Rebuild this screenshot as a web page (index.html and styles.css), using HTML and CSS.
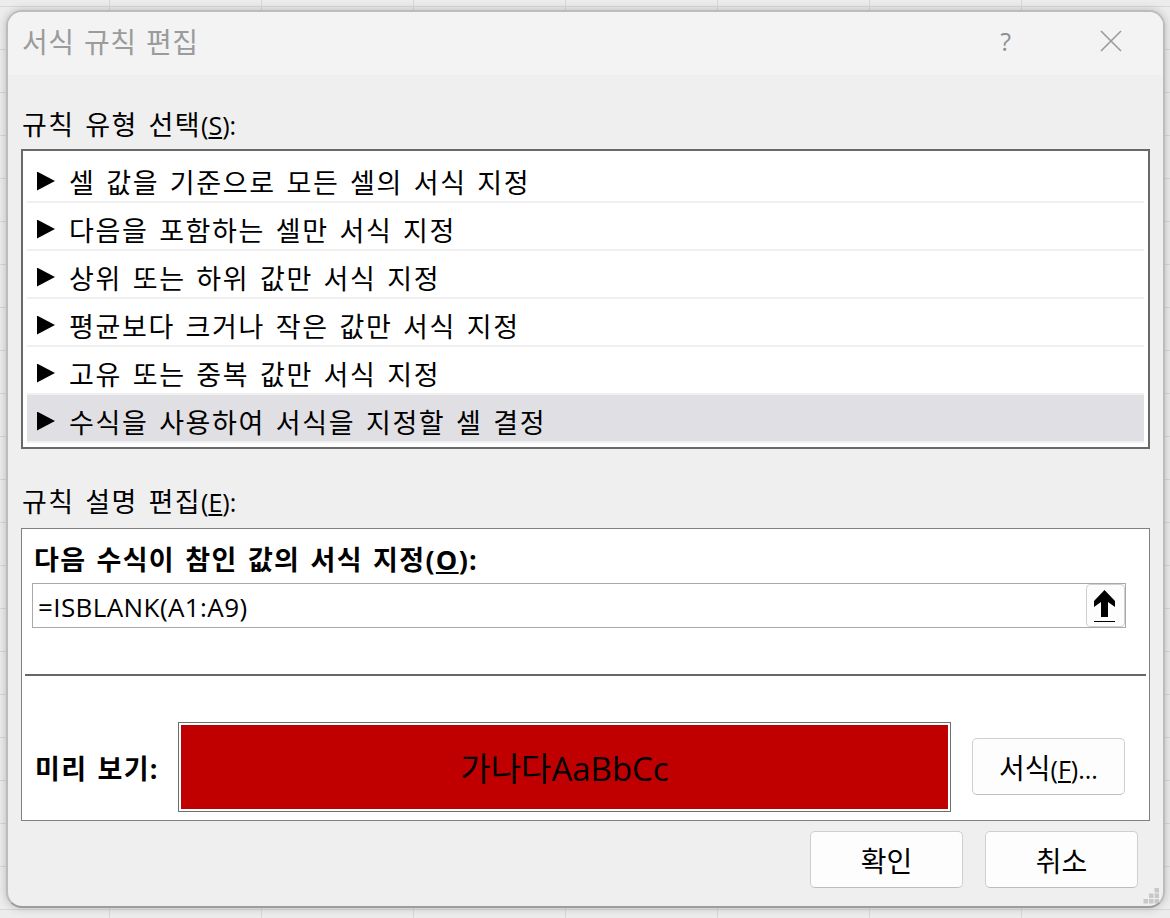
FILE: index.html
```html
<!DOCTYPE html>
<html lang="ko">
<head>
<meta charset="utf-8">
<title>서식 규칙 편집</title>
<link rel="stylesheet" href="styles.css">
</head>
<body>
<div class="dialog">
  <header class="titlebar">
    <span class="title">서식 규칙 편집</span>
    <span class="help">?</span>
    <svg class="close" width="22" height="22" viewBox="0 0 22 22"><path d="M1 1 L21 21 M21 1 L1 21" stroke="#9a9a9a" stroke-width="1.6" fill="none"/></svg>
  </header>
  <main class="content">
    <div class="label label-type">규칙 유형 선택<span class="key">(<u>S</u>):</span></div>
    <ul class="rules">
      <li class="rule"><span class="tri"></span><span>셀 값을 기준으로 모든 셀의 서식 지정</span></li>
      <li class="rule"><span class="tri"></span><span>다음을 포함하는 셀만 서식 지정</span></li>
      <li class="rule"><span class="tri"></span><span>상위 또는 하위 값만 서식 지정</span></li>
      <li class="rule"><span class="tri"></span><span>평균보다 크거나 작은 값만 서식 지정</span></li>
      <li class="rule"><span class="tri"></span><span>고유 또는 중복 값만 서식 지정</span></li>
      <li class="rule selected"><span class="tri"></span><span>수식을 사용하여 서식을 지정할 셀 결정</span></li>
    </ul>
    <div class="label label-edit">규칙 설명 편집<span class="key">(<u>E</u>):</span></div>
    <section class="panel">
      <div class="bold formula-label">다음 수식이 참인 값의 서식 지정(<u>O</u>):</div>
      <div class="input">
        <span class="formula">=ISBLANK(A1:A9)</span>
        <button class="picker" type="button" aria-label="범위 선택">
          <svg width="21" height="32" viewBox="0 0 21 32"><path d="M10.500 0 L21 11 V17 L14 12 V27 H7 V12 L0 17 V11 Z" fill="#000"/><rect x="0" y="31" width="21" height="1" fill="#000"/></svg>
        </button>
      </div>
      <div class="divider"></div>
      <div class="preview-row">
        <div class="bold preview-label">미리 보기:</div>
        <div class="preview"><div class="swatch">가나다AaBbCc</div></div>
        <button class="btn format" type="button">서식<span class="key">(<u>F</u>)...</span></button>
      </div>
    </section>
    <div class="actions">
      <button class="btn" type="button">확인</button>
      <button class="btn" type="button">취소</button>
    </div>
    <svg class="grip" width="20" height="20" viewBox="0 0 20 20"><path d="M13.500 2h4.500v4.500h-4.500zM8 7.500h4.500v4.500H8zM13.500 7.500h4.500v4.500h-4.500zM2.500 13h4.500v4.500H2.500zM8 13h4.500v4.500H8zM13.500 13h4.500v4.500h-4.500z" fill="#c8c8c8"/></svg>
  </main>
</div>
</body>
</html>
```
FILE: styles.css
```css
* { box-sizing: border-box; }
html, body { margin: 0; height: 100%; }
body {
  width: 1170px;
  height: 918px;
  overflow: hidden;
  padding: 10px 5px 10px 6px;
  background-color: #ececec;
  background-image:
    linear-gradient(#d8d8d8 1px, transparent 1px),
    linear-gradient(90deg, #d8d8d8 1px, transparent 1px);
  background-size: 152px 43px;
  background-position: 109px 6px;
  font-family: "Open Sans", "Noto Sans CJK KR", sans-serif;
  color: #000;
}
.dialog {
  position: relative;
  height: 898px;
  border: 2px solid #bcbcbc;
  border-bottom-color: #9c9c9c;
  border-radius: 16px;
  background: #efefef;
  overflow: hidden;
  box-shadow: 0 0 8px rgba(0,0,0,.22);
}
.titlebar {
  display: flex;
  align-items: center;
  height: 63px;
  background: #f3f3f3;
  padding: 0 41px 5px 14px;
}
.title { flex: 1; font-size: 28px; color: #9b9b9b; letter-spacing: .4px; word-spacing: 2px; }
.help { font-size: 25px; color: #8e8e8e; margin-right: 89px; }
.content { padding: 0 13px; position: relative; height: 833px; }
.label { font-size: 27px; line-height: 36px; letter-spacing: 1.5px; word-spacing: 2px; white-space: nowrap; }
.key { font-size: 25px; letter-spacing: 0; }
.label u, .bold u, .btn u { text-underline-offset: 2px; }
.label-type { padding-top: 32px; height: 74px; padding-left: 1px; }
.rules {
  list-style: none;
  margin: 0;
  height: 300px;
  padding: 4px 4px 6px 4px;
  border: 2px solid #696969;
  background: #fff;
}
.rule {
  display: flex;
  align-items: center;
  gap: 14px;
  height: 48px;
  padding: 6px 10px 0;
  font-size: 27px;
  letter-spacing: 1.65px;
  word-spacing: 2px;
  border-bottom: 2px solid #f0f0f0;
}
.rule.selected { background: #e0dfe3; }
.tri {
  width: 18px;
  height: 19px;
  background: #000;
  clip-path: polygon(0 0, 100% 50%, 0 100%);
  flex: none;
}
.label-edit { height: 79px; padding-top: 35px; padding-left: 1px; }
.panel {
  height: 293px;
  border: 1px solid #808080;
  background: #fff;
  padding: 13px 3px 0 10px;
  position: relative;
}
.bold { font-weight: 700; font-size: 27px; letter-spacing: 1.3px; word-spacing: 2px; white-space: nowrap; }
.formula-label { line-height: 36px; padding-left: 2px; }
.input {
  display: flex;
  align-items: center;
  justify-content: space-between;
  height: 45px;
  width: 1094px;
  margin-top: 5px;
  border: 1px solid #a9a9a9;
  padding: 0 0 0 5px;
}
.formula { font-size: 26px; letter-spacing: .4px; padding-top: 2px; }
.picker {
  width: 39px;
  height: 43px;
  padding: 0 2px 0 0;
  display: flex;
  align-items: center;
  justify-content: center;
  background: #fdfdfd;
  border: 1px solid #d0d0d0;
  border-radius: 4px;
}
.divider { height: 2px; background: #666; margin: 46px 0 0 -7px; width: 1121px; }
.preview-row { display: flex; align-items: center; margin-top: 46px; }
.preview-label { width: 146px; padding-left: 3px; }
.preview {
  width: 773px;
  height: 90px;
  border: 1px solid #6e6e6e;
  padding: 2px;
  background: #fff;
}
.swatch {
  height: 100%;
  background: #c00000;
  display: flex;
  align-items: center;
  justify-content: center;
  font-size: 33px;
  color: #000;
}
.btn {
  width: 153px;
  height: 57px;
  padding: 0;
  background: #fdfdfd;
  border: 1px solid #cfcfcf;
  border-bottom-color: #bdbdbd;
  border-radius: 5px;
  font-family: inherit;
  font-size: 28px;
  color: #000;
}
.format { margin: 0 0 1px 21px; }
.actions { display: flex; justify-content: flex-end; gap: 22px; margin-top: 10px; padding-right: 12px; }
.grip { position: absolute; right: 2px; bottom: 2px; }
```
